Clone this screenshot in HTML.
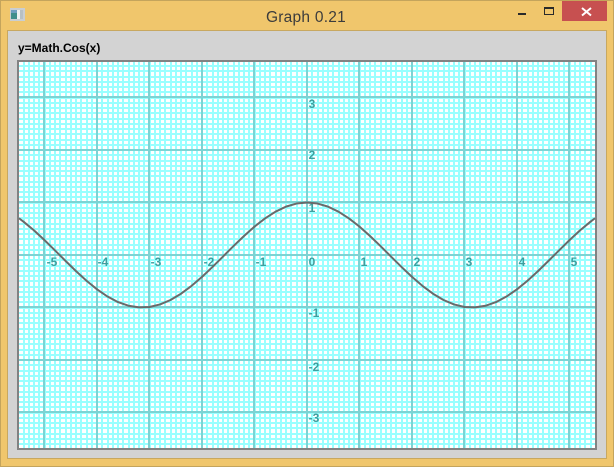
<!DOCTYPE html>
<html>
<head>
<meta charset="utf-8">
<style>
html,body{margin:0;padding:0;width:614px;height:467px;overflow:hidden;background:#f0c66c}
svg{display:block;position:absolute;left:0;top:0}
#plot{position:absolute;left:19px;top:62px;width:576px;height:386px;background-color:#fff;
background-image:
linear-gradient(to right,#99ffff 0 2px,transparent 2px 5px,#99ffff 5px 7px,transparent 7px 11px,#99ffff 11px 13px,transparent 13px 16px,#99ffff 16px 18px,transparent 18px),
linear-gradient(to bottom,#99ffff 0 2px,transparent 2px 5px,#99ffff 5px 7px,transparent 7px 11px,#99ffff 11px 13px,transparent 13px 16px,#99ffff 16px 18px,transparent 18px);
background-size:21px 100%,100% 21px;
background-position:14px 0,0 3px}
</style>
</head>
<body>
<div id="plot"></div>
<svg width="614" height="467" viewBox="0 0 614 467" xmlns="http://www.w3.org/2000/svg" font-family="'Liberation Sans',sans-serif">
<!-- window frame -->
<path fill-rule="evenodd" fill="#f0c66c" d="M0 0H614V467H0ZM19 62V448H595V62Z"/>
<path fill="none" stroke="#c4a45c" d="M.5 466.5V.5H613.5V466.5Z"/>
<path fill-rule="evenodd" fill="#d3d3d3" d="M8 31H606V459H8ZM17 60V450H597V60Z"/>
<rect x="7.500" y="30.500" width="599" height="428" fill="none" stroke="#c8a860"/>
<path fill="none" stroke="#828282" stroke-width="2" d="M18 61H596V449H18Z"/>
<!-- major grid -->
<g fill="#7dd3d3" shape-rendering="crispEdges">
<rect x="43" y="62" width="2" height="386"/><rect x="96" y="62" width="2" height="386"/><rect x="148" y="62" width="2" height="386"/><rect x="201" y="62" width="2" height="386"/><rect x="253" y="62" width="2" height="386"/><rect x="306" y="62" width="2" height="386"/><rect x="358" y="62" width="2" height="386"/><rect x="411" y="62" width="2" height="386"/><rect x="463" y="62" width="2" height="386"/><rect x="516" y="62" width="2" height="386"/><rect x="568" y="62" width="2" height="386"/>
<rect x="19" y="96" width="576" height="2"/><rect x="19" y="149" width="576" height="2"/><rect x="19" y="201" width="576" height="2"/><rect x="19" y="254" width="576" height="2"/><rect x="19" y="306" width="576" height="2"/><rect x="19" y="359" width="576" height="2"/><rect x="19" y="411" width="576" height="2"/>
</g>
<!-- labels -->
<g fill="#3f9f9f" font-size="12" font-weight="bold" text-anchor="middle">
<text x="52" y="266">-5</text><text x="103" y="266">-4</text><text x="156" y="266">-3</text><text x="209" y="266">-2</text><text x="261" y="266">-1</text><text x="312" y="266">0</text><text x="364" y="266">1</text><text x="417" y="266">2</text><text x="469" y="266">3</text><text x="522" y="266">4</text><text x="574" y="266">5</text>
<text x="312" y="108">3</text><text x="312" y="159">2</text><text x="312" y="212">1</text><text x="314" y="317">-1</text><text x="314" y="371">-2</text><text x="314" y="422">-3</text>
</g>
<!-- curve -->
<polyline fill="none" stroke="#6a6a6a" stroke-width="2" stroke-linejoin="round" points="19,218.25 23.5,221.68 34,230.4 44.5,240.11 55,250.41 65.5,260.89 76,271.13 86.5,280.74 97,289.32 107.5,296.53 118,302.08 128.5,305.76 139,307.41 149.5,306.97 160,304.46 170.5,299.99 181,293.71 191.5,285.9 202,276.85 212.5,266.93 223,256.53 233.5,246.08 244,235.97 254.5,226.63 265,218.42 275.5,211.67 286,206.64 296.5,203.55 307,202.5 317.5,203.55 328,206.64 338.5,211.67 349,218.42 359.5,226.63 370,235.97 380.5,246.08 391,256.53 401.5,266.93 412,276.85 422.5,285.9 433,293.71 443.5,299.99 454,304.46 464.5,306.97 475,307.41 485.5,305.76 496,302.08 506.5,296.53 517,289.32 527.5,280.74 538,271.13 548.5,260.89 559,250.41 569.5,240.11 580,230.4 590.5,221.68 595,218.25"/>
<!-- graph title -->
<text x="18" y="52" font-size="12" font-weight="bold" fill="#000">y=Math.Cos(x)</text>
<!-- window title -->
<text x="306" y="22" font-size="15.5" fill="#3c3c3c" text-anchor="middle" letter-spacing=".25">Graph 0.21</text>
<!-- app icon -->
<g shape-rendering="crispEdges">
<rect x="10" y="8" width="15" height="13" fill="#c9ced2"/>
<rect x="11" y="10" width="6" height="9" fill="#3f8f8c"/>
<rect x="11" y="10" width="6" height="3" fill="#6f9fc0"/>
<rect x="17" y="10" width="3" height="9" fill="#eef2f2"/>
<rect x="20" y="10" width="3" height="9" fill="#b8c0c4"/>
</g>
<!-- window buttons -->
<g shape-rendering="crispEdges">
<rect x="518" y="13" width="8" height="2" fill="#2a2a2a"/>
<rect x="544.500" y="7.500" width="9" height="7" fill="none" stroke="#2a2a2a"/>
<rect x="544" y="7" width="10" height="2" fill="#2a2a2a"/>
<rect x="562" y="1" width="45" height="20" fill="#c75050"/>
</g>
<path d="M582 8L591 15.500M591 8L582 15.500" stroke="#fff" stroke-width="2" fill="none"/>
</svg>
</body>
</html>
